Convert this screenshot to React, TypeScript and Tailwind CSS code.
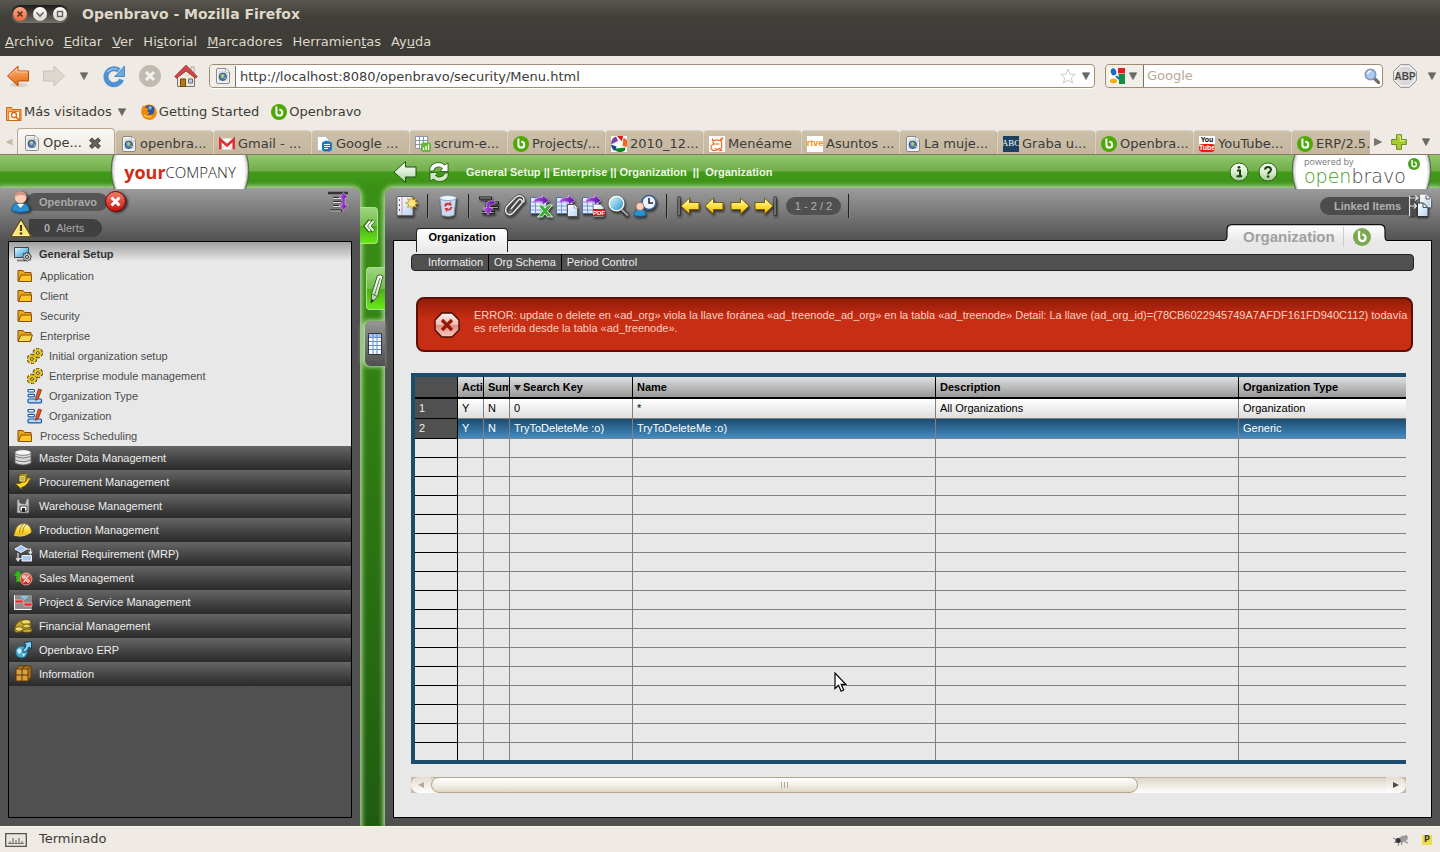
import React from 'react';

type IconProps = { className?: string };

/* Gradients shared by all the drawings below */
const SharedDefs = () => (
  <svg className="absolute h-0 w-0" aria-hidden="true">
    <defs>
      <linearGradient id="orange" x1="0" y1="0" x2="0" y2="1"><stop offset="0" stopColor="#ffb070" /><stop offset="1" stopColor="#e06a10" /></linearGradient>
      <linearGradient id="yellow" x1="0" y1="0" x2="0" y2="1"><stop offset="0" stopColor="#fffce0" /><stop offset="0.5" stopColor="#ffe040" /><stop offset="1" stopColor="#e8b000" /></linearGradient>
      <linearGradient id="silver" x1="0" y1="0" x2="0" y2="1"><stop offset="0" stopColor="#ffffff" /><stop offset="0.5" stopColor="#dcecd4" /><stop offset="1" stopColor="#a8cc98" /></linearGradient>
      <linearGradient id="red" x1="0" y1="0" x2="0" y2="1"><stop offset="0" stopColor="#f08070" /><stop offset="1" stopColor="#c81008" /></linearGradient>
      <linearGradient id="lens" x1="0" y1="0" x2="1" y2="1"><stop offset="0" stopColor="#e8faff" /><stop offset="0.5" stopColor="#80c8e8" /><stop offset="1" stopColor="#2888c0" /></linearGradient>
      <linearGradient id="paper" x1="0" y1="0" x2="1" y2="1"><stop offset="0" stopColor="#ffffff" /><stop offset="1" stopColor="#b8d4f4" /></linearGradient>
      <linearGradient id="purple" x1="0" y1="0" x2="1" y2="0"><stop offset="0" stopColor="#c050e8" /><stop offset="1" stopColor="#5a10a0" /></linearGradient>
      <linearGradient id="tab" x1="0" y1="0" x2="0" y2="1"><stop offset="0" stopColor="#ffffff" /><stop offset="1" stopColor="#e8e8e8" /></linearGradient>
      <linearGradient id="glossRed" x1="0" y1="0" x2="0" y2="1"><stop offset="0" stopColor="#fff0ee" /><stop offset="0.5" stopColor="#f0b8b0" /><stop offset="0.52" stopColor="#e09088" /><stop offset="1" stopColor="#f8c8c0" /></linearGradient>
    </defs>
  </svg>
);

const Caret = ({ className = 'h-2 w-2 text-[#6a6a66]' }: IconProps) => (
  <svg viewBox="0 0 8 8" className={className}><path d="M0.3 0.8h7.4L4 7.6z" fill="currentColor" stroke="#55554f" strokeWidth="0.6" /></svg>
);

const BravoIcon = ({ className = 'h-4 w-4 text-[#4ea808]' }: IconProps) => (
  <svg viewBox="0 0 16 16" className={className}>
    <circle cx="8" cy="8" r="8" fill="currentColor" />
    <path d="M5.400 2.500v6.200a2.900 2.900 0 1 0 2.900-2.900" fill="none" stroke="#fff" strokeWidth="2" />
  </svg>
);

const PageIcon = () => (
  <svg viewBox="0 0 16 16" className="h-4 w-4">
    <path d="M1.500 2q0-1.500 1.500-1.500h8l3.500 3.500v10q0 1.500-1.500 1.500H3q-1.500 0-1.500-1.500z" fill="#f8f8f6" stroke="#888a85" />
    <path d="M3 2.500h7v3h3.200v8H3z" fill="#dddedb" />
    <path d="M10.500.8v4h4" fill="#fff" stroke="#9a9c98" strokeWidth="0.7" />
    <circle cx="7.800" cy="8.800" r="3.700" fill="#4a78c0" stroke="#244a80" strokeWidth="0.8" />
    <path d="M5.500 7l2.300-1.200L9.500 7.500 8.500 9.500 7 10.500zM9 10.500l2-1.500-.5 2.500z" fill="#b8c868" />
  </svg>
);

const GmailIcon = () => (
  <svg viewBox="0 0 16 16" className="h-4 w-4">
    <rect y="2.500" width="16" height="11" fill="#fff" />
    <path d="M1.300 13.500V3.500L8 9.500l6.700-6v10" fill="none" stroke="#e03030" strokeWidth="2.600" />
    <path d="M3 13l3-4M13 13l-3-4" stroke="#e8b0a8" strokeWidth="0.8" />
  </svg>
);

const GoogleDocIcon = () => (
  <svg viewBox="0 0 16 16" className="h-4 w-4">
    <path d="M.5.5h8l3 3v11H.5z" fill="#fff" stroke="#b8c4d0" />
    <path d="M5 6.500l4-2 6 2v7l-2 2H7l-2-2z" fill="#1d78b8" />
    <path d="M7 8.500h6M7 10.500h6M7 12.500h4" stroke="#fff" strokeWidth="1.100" />
  </svg>
);

const SheetIcon = () => (
  <svg viewBox="0 0 16 16" className="h-4 w-4">
    <path d="M.5.5h12v12H.5zM.5 4.500h12M.5 8.500h12M4.500.5v12M8.500.5v12" fill="#fff" stroke="#8898a8" />
    <rect x="6" y="6.500" width="10" height="9.500" rx="2" fill="#68b838" />
    <path d="M8.500 14v-2.500M11 14v-4M13.500 14V8.500" stroke="#fff" strokeWidth="1.300" />
  </svg>
);

const PicasaIcon = () => (
  <svg viewBox="0 0 16 16" className="h-4 w-4">
    <path d="M0 0h16v16H0z" fill="#fff" />
    <path d="M6 0h6l-1 5.500z" fill="#e01818" />
    <path d="M12.500 1.500L16 4v7l-4.500-1z" fill="#f06820" />
    <path d="M5 12.500l9.500-1L14 14.500q-5 3-9 .5z" fill="#108818" />
    <path d="M.5 11L0 8.500l5.500 2-1 4.500q-3-1-4-4z" fill="#184890" />
    <path d="M0 7.500Q.5 2 5 .5L7 5l-6 3z" fill="#8040a0" />
  </svg>
);

const MeneameIcon = () => (
  <svg viewBox="0 0 16 16" className="h-4 w-4">
    <path d="M0 0h16v16H0z" fill="#fff" />
    <path d="M14.500 2.500q-2.500-1-3 1.500M4 2.500Q2.500 4 4.500 5q3-2 6-.5 2 .5 3-1M4.500 5Q3 7 5.500 8h5M5.500 8Q1.500 9 2 12t4 2.500q3.500 0 4-2.500M6 12.500q2.500 2 5-.5M12 5q1.500 3 .5 6.500t-2.500 3h3.500" fill="none" stroke="#f06820" strokeWidth="1.200" />
  </svg>
);

const TextFavicon = ({ kind }: { kind: string }) => {
  if (kind === 'rtve') return <span className="flex h-4 w-4 items-center justify-center bg-white text-[9px] font-bold text-[#f09010] [font-family:'Liberation_Sans',sans-serif]">rtve</span>;
  if (kind === 'abc') return <span className="flex h-4 w-4 items-center justify-center overflow-hidden bg-[#1c4060] text-[9px] text-white [font-family:'Liberation_Serif',serif]">ABC</span>;
  return (
    <span className="flex h-4 w-4 flex-col text-center text-[7px] font-bold leading-[8px] [font-family:'Liberation_Sans',sans-serif]">
      <span className="bg-white text-black">You</span>
      <span className="rounded-sm bg-[#f01808] text-white">Tube</span>
    </span>
  );
};

const Favicon = ({ kind }: { kind: string }) => {
  switch (kind) {
    case 'page': return <PageIcon />;
    case 'gmail': return <GmailIcon />;
    case 'doc': return <GoogleDocIcon />;
    case 'sheet': return <SheetIcon />;
    case 'picasa': return <PicasaIcon />;
    case 'meneame': return <MeneameIcon />;
    case 'bravo': return <BravoIcon />;
    default: return <TextFavicon kind={kind} />;
  }
};

const menus = [
  ['', 'A', 'rchivo'],
  ['', 'E', 'ditar'],
  ['', 'V', 'er'],
  ['Hi', 's', 'torial'],
  ['', 'M', 'arcadores'],
  ['Herramien', 't', 'as'],
  ['Ay', 'u', 'da'],
];

const browserTabs = [
  { icon: 'page', label: 'openbra...' },
  { icon: 'gmail', label: 'Gmail - ...' },
  { icon: 'doc', label: 'Google ...' },
  { icon: 'sheet', label: 'scrum-e...' },
  { icon: 'bravo', label: 'Projects/...' },
  { icon: 'picasa', label: '2010_12...' },
  { icon: 'meneame', label: 'Menéame' },
  { icon: 'rtve', label: 'Asuntos ...' },
  { icon: 'page', label: 'La muje...' },
  { icon: 'abc', label: 'Graba u...' },
  { icon: 'bravo', label: 'Openbra...' },
  { icon: 'youtube', label: 'YouTube...' },
  { icon: 'bravo', label: 'ERP/2.5...' },
];

const BrowserChrome = () => (
  <header className="bg-[#efeae3] text-[13px] text-[#3c3b37] [font-family:'DejaVu_Sans',sans-serif]">
    {/* Window title and menus */}
    <div className="bg-linear-to-b from-[#59574f] via-[#403f3a] via-30% to-[#3c3b37] text-[#dfd8c8]">
      <div className="flex h-7 items-center px-[11px]">
        <div className="flex h-[18px] w-[58px] items-center justify-center gap-[6px] rounded-full bg-linear-to-b from-[#1c1c1a] to-[#75736c]">
          <button aria-label="Cerrar" className="h-[14px] w-[14px] rounded-full bg-linear-to-b from-[#f8a888] to-[#f06838]">
            <svg viewBox="0 0 14 14"><path d="M4.500 4.500l5 5M9.500 4.500l-5 5" stroke="#5a2a18" strokeWidth="1.600" /></svg>
          </button>
          <button aria-label="Minimizar" className="h-[14px] w-[14px] rounded-full bg-linear-to-b from-white to-[#d8d4c8]">
            <svg viewBox="0 0 14 14"><path d="M3.500 5.500L7 9l3.500-3.500" fill="none" stroke="#66645c" strokeWidth="1.600" /></svg>
          </button>
          <button aria-label="Maximizar" className="h-[14px] w-[14px] rounded-full bg-linear-to-b from-white to-[#d8d4c8]">
            <svg viewBox="0 0 14 14"><path d="M4.500 4.500h5v5h-5z" fill="none" stroke="#66645c" strokeWidth="1.400" /></svg>
          </button>
        </div>
        <h1 className="ml-[13px] text-[14px] font-bold">Openbravo - Mozilla Firefox</h1>
      </div>
      <nav className="flex h-7 items-center gap-[10px] px-[5px] pb-px">
        {menus.map(([before, key, after]) => (
          <button key={after}>{before}<u>{key}</u>{after}</button>
        ))}
      </nav>
    </div>

    {/* Navigation toolbar */}
    <div className="flex h-10 items-center pl-[6px] pr-1">
      <button aria-label="Atrás">
        <svg viewBox="0 0 24 24" className="h-6 w-6">
          <ellipse cx="13" cy="21" rx="9" ry="2" fill="#d8d2c8" />
          <path d="M1.500 12L12 2v5h10.500v10H12v5z" fill="url(#orange)" stroke="#c04810" />
          <path d="M3.500 12L11 4.800V8h10.500" fill="none" stroke="#ffd0a8" />
        </svg>
      </button>
      <button aria-label="Adelante" className="ml-3">
        <svg viewBox="0 0 24 24" className="h-6 w-6"><path d="M22.500 12L12 2v5H1.500v10H12v5z" fill="#dcd8d0" stroke="#c8c4bb" /></svg>
      </button>
      <button aria-label="Páginas recientes" className="ml-[14px]"><Caret /></button>
      <button aria-label="Recargar" className="ml-[14px]">
        <svg viewBox="0 0 24 24" className="h-6 w-6">
          <path d="M19.500 15.500A8 8 0 1 1 17 6.500" fill="none" stroke="#5090d0" strokeWidth="5" />
          <path d="M22.500 2v10.500h-10L16.500 9z" fill="#6aa8e0" stroke="#4a88c8" />
          <path d="M5.500 8a8 8 0 0 1 10-2.500" fill="none" stroke="#90c0ec" strokeWidth="1.500" />
        </svg>
      </button>
      <button aria-label="Detener" className="ml-3">
        <svg viewBox="0 0 24 24" className="h-6 w-6"><circle cx="12" cy="12" r="11" fill="#c0bbb2" /><path d="M8 8l8 8M16 8l-8 8" stroke="#f4f2ee" strokeWidth="3" /></svg>
      </button>
      <button aria-label="Inicio" className="ml-3">
        <svg viewBox="0 0 24 24" className="h-6 w-6">
          <path d="M3.500 11v11.500h17V11L12 4z" fill="#ece8e0" stroke="#77736a" />
          <path d="M17 3h3v6h-3z" fill="#f0ece8" stroke="#888" strokeWidth="0.700" />
          <path d="M.8 12.500L12 1.200l11.200 11.300-1.700 1.700L12 7l-9.500 7.200z" fill="#d04848" stroke="#982020" strokeWidth="0.800" />
          <path d="M6.500 15h5v7.500h-5z" fill="#b87818" stroke="#704808" />
          <path d="M14.500 15h4v4h-4z" fill="#b8d0e8" stroke="#706c60" />
        </svg>
      </button>
      <div className="ml-[11px] flex h-6 flex-1 items-center rounded border border-[#a08c70] bg-white shadow-[0_1px_0_#fff]">
        <span className="flex h-full w-[25px] items-center justify-center rounded-l bg-[#f2eee8]"><PageIcon /></span>
        <input aria-label="Dirección" defaultValue="http://localhost:8080/openbravo/security/Menu.html" className="h-[21px] min-w-0 flex-1 border-l border-[#7c7060] px-1 outline-none" />
        <button aria-label="Marcar esta página">
          <svg viewBox="0 0 16 16" className="h-4 w-4"><path d="M8 1l2 5 5.300.3-4 3.500 1.300 5.200L8 12.200 3.400 15l1.300-5.200-4-3.500L6 6z" fill="#fff" stroke="#cfcac0" /></svg>
        </button>
        <button aria-label="Historial de direcciones" className="ml-[6px] mr-1"><Caret /></button>
      </div>
      <div className="ml-[10px] flex h-6 w-[278px] items-center rounded border border-[#a08c70] bg-white">
        <button aria-label="Motor de búsqueda" className="flex h-full w-[38px] items-center gap-1 rounded-l border-r border-[#7c7060] bg-[#f2eee8] pl-[3px]">
          <svg viewBox="0 0 16 16" className="h-4 w-4">
            <path d="M0 0h16v16H0z" fill="#fff" />
            <path d="M9 0h7v5.500H9z" fill="#e02020" /><path d="M9.500 6H16v10h-6z" fill="#109040" />
            <ellipse cx="4.500" cy="3.800" rx="2.800" ry="3.600" fill="#2068c8" transform="rotate(-15 4.500 3.800)" /><ellipse cx="4.500" cy="13" rx="3.600" ry="2.500" fill="#f0b010" />
            <path d="M7 8l3 3" stroke="#2068c8" strokeWidth="2" />
          </svg>
          <Caret />
        </button>
        <input aria-label="Buscar" placeholder="Google" className="min-w-0 flex-1 px-[3px] outline-none placeholder:text-[#b8aa94]" />
        <button aria-label="Iniciar búsqueda" className="mr-[2px]">
          <svg viewBox="0 0 16 16" className="h-4 w-4">
            <path d="M10 10l4.500 4.500" stroke="#70706c" strokeWidth="3.200" strokeLinecap="round" />
            <circle cx="6.500" cy="6.500" r="5.200" fill="#a8ccf0" stroke="#8898b0" strokeWidth="1.600" />
            <path d="M3.500 6q.5-2.500 3-3" fill="none" stroke="#fff" strokeWidth="1.400" />
          </svg>
        </button>
      </div>
      <button aria-label="Adblock Plus" className="ml-[10px]">
        <svg viewBox="0 0 24 24" className="h-6 w-6">
          <path d="M7.500.7h9l6.800 6.800v9l-6.800 6.800h-9L.7 16.500v-9z" fill="#d8d8d8" stroke="#888" />
          <path d="M8 2h8l6 6v8l-6 6H8l-6-6V8z" fill="none" stroke="#fff" strokeWidth="1.200" />
          <text x="12" y="15.500" textAnchor="middle" fontSize="10" fontWeight="bold" fill="#4a4a4a" fontFamily="Liberation Sans, sans-serif">ABP</text>
        </svg>
      </button>
      <button aria-label="Opciones" className="ml-[11px]"><Caret /></button>
    </div>

    {/* Bookmarks */}
    <div className="flex h-8 items-center pl-[6px]">
      <button className="flex items-center gap-[2px]">
        <svg viewBox="0 0 16 16" className="mt-1 h-4 w-4">
          <path d="M.5 14.500V1.500h5l1 2h8.500v11z" fill="#f4a860" stroke="#d06810" />
          <path d="M2.500 14V5.500h11V14" fill="#fff4e4" stroke="#e08030" />
          <circle cx="8" cy="9" r="2.500" fill="#fff" stroke="#d86810" strokeWidth="1.300" /><path d="M10 11l3 3" stroke="#d86810" strokeWidth="1.600" />
        </svg>
        Más visitados
        <Caret className="ml-1 h-2 w-2 text-[#6a6a66]" />
      </button>
      <a href="#start" className="ml-[15px] flex items-center gap-[2px]">
        <svg viewBox="0 0 16 16" className="h-4 w-4">
          <circle cx="8" cy="8" r="7.600" fill="#e06a08" />
          <circle cx="8.500" cy="6.500" r="5.300" fill="#2458a0" />
          <path d="M7 3l3-1 1 2-2 2z" fill="#80b8e8" />
          <path d="M.5 5L2 1.500 4.500 3.500 8 5 6 7l2.500 1.500L6.500 11l5-.5q2.500-2 1.500-7 4 4 2 8.500T7 15.500 .500 8z" fill="#f08810" />
          <path d="M3 11q4 3 8 1" fill="none" stroke="#ffd040" strokeWidth="1.200" />
        </svg>
        Getting Started
      </a>
      <a href="#openbravo" className="ml-3 flex items-center gap-[2px]"><BravoIcon />Openbravo</a>
    </div>

    {/* Browser tabs */}
    <div className="flex h-[27px] items-end border-b border-[#8c7866]">
      <button aria-label="Pestañas anteriores" className="mb-2 ml-[5px] mr-1">
        <svg viewBox="0 0 8 8" className="h-2 w-2"><path d="M7.500.5v7L.5 4z" fill="#c8baa4" /></svg>
      </button>
      <div role="tablist" className="flex min-w-0 flex-1 items-end overflow-hidden">
        <div role="tab" aria-selected="true" className="flex h-[26px] w-[98px] shrink-0 items-center rounded-t border border-b-0 border-[#b8a890] bg-linear-to-b from-[#faf8f5] to-[#efeae3] pl-[6px] pt-[2px]">
          <PageIcon />
          <span className="ml-[3px]">Ope...</span>
          <button aria-label="Cerrar pestaña" className="ml-[6px]">
            <svg viewBox="0 0 14 14" className="h-[14px] w-[14px]"><path d="M2.500 3L11.500 11.500M11.500 3L2.500 11.500" stroke="#3e3d39" strokeWidth="4.200" /><path d="M3 3.500L11 11M11 3.500L3 11" stroke="#66645e" strokeWidth="2.400" /></svg>
          </button>
        </div>
        {browserTabs.map((tab, i) => (
          <button key={i} role="tab" aria-selected="false" className="flex h-6 w-[98px] shrink-0 items-center gap-[3px] overflow-hidden whitespace-nowrap rounded-t-sm border-l border-r border-t border-l-[#ddd2c0] border-r-[#c4b59c] border-t-[#ddd2c0] bg-linear-to-b from-[#cdc0aa] to-[#c4b69e] pl-[5px] pt-[2px]">
            <span className="shrink-0"><Favicon kind={tab.icon} /></span>
            {tab.label}
          </button>
        ))}
      </div>
      <button aria-label="Pestañas siguientes" className="mb-2 ml-1">
        <svg viewBox="0 0 8 8" className="h-2 w-2"><path d="M.5.5v7l7-3.500z" fill="#77756e" stroke="#55544e" strokeWidth="0.600" /></svg>
      </button>
      <button aria-label="Nueva pestaña" className="mb-1 ml-[9px]">
        <svg viewBox="0 0 16 16" className="h-4 w-4"><path d="M5.500.7h5v4.800h4.800v5h-4.800v4.800h-5v-4.800H.7v-5h4.800z" fill="#a8cc30" stroke="#6a8c20" /><path d="M6.700 2h2.600v4.700h4.800" fill="none" stroke="#e0f090" /></svg>
      </button>
      <button aria-label="Listar pestañas" className="mb-2 ml-[15px] mr-[10px]"><Caret /></button>
    </div>
  </header>
);

const TopBar = () => (
  <div className="flex h-[33px] bg-[linear-gradient(to_bottom,#92c66e_0,#71ae49_16px,#429a1a_17px,#3a8f14_33px)] [font-family:'Liberation_Sans',sans-serif]">
    <div className="flex w-[385px] shrink-0 pl-[110px]">
      <div className="relative z-10 flex h-[34px] w-[140px] items-center justify-center">
        <svg viewBox="0 0 140 34" preserveAspectRatio="none" className="absolute inset-0 h-full w-full">
          <path d="M3 0Q-2 16 4 34H136Q142 16 137 0z" fill="#4c6c3c" />
          <path d="M4 0Q-1 16 5 34H135Q141 16 136 0z" fill="#b4b4b4" />
          <path d="M5 0Q0 16 6 34H134Q140 16 135 0z" fill="#e4e4e4" />
          <path d="M7 0Q2 16 7 34H133Q138 16 133 0z" fill="#fff" />
        </svg>
        <span className="relative text-[18px] font-bold leading-none text-[#d42c14] [font-family:'Open_Sans',sans-serif]">your</span>
        <span className="relative text-[15px] font-light leading-none text-[#1c1c1c] [font-family:'Open_Sans',sans-serif]">COMPANY</span>
      </div>
    </div>
    <button aria-label="Back" className="ml-2">
      <svg viewBox="0 0 24 24" className="h-6 w-6"><path d="M1 12L12.500 1.500V7H23v10H12.500v5.500z" fill="url(#silver)" stroke="#1c5408" /></svg>
    </button>
    <button aria-label="Refresh" className="ml-[10px]">
      <svg viewBox="0 0 24 24" className="h-6 w-6">
        <g stroke="#1c5408" strokeWidth="0.800" fill="#fff">
          <path d="M2.500 11Q3 3 11 2.500q4-.2 6.500 2.500L21 3v8.500h-8L15.500 8.500q-2-2-4.500-1.500-4 .5-4.500 4z" />
          <path d="M21.500 13Q21 21 13 21.500q-4 .2-6.500-2.500L3 21v-8.500h8L8.500 15.500q2 2 4.500 1.500 4-.5 4.500-4z" fill="#d4e8ca" />
        </g>
      </svg>
    </button>
    <p className="ml-[15px] flex min-w-0 items-center whitespace-pre pt-[2px] text-[11px] font-bold text-[#eef7e8]">General Setup || Enterprise || Organization  ||  Organization</p>
    <button aria-label="About" className="ml-auto">
      <svg viewBox="0 0 20 20" className="h-5 w-5"><circle cx="10" cy="10" r="9" fill="url(#silver)" stroke="#2c6c14" /><path d="M8 8.500h3v5.500M7.500 14.200h5.500" fill="none" stroke="#184808" strokeWidth="2" /><circle cx="10" cy="5.300" r="1.400" fill="#184808" /></svg>
    </button>
    <button aria-label="Help" className="ml-[9px]">
      <svg viewBox="0 0 20 20" className="h-5 w-5"><circle cx="10" cy="10" r="9" fill="url(#silver)" stroke="#2c6c14" /><path d="M7 7.700q.2-2.700 3-2.700t3 2.500q0 1.500-1.500 2.500-1.300.8-1.300 2.200" fill="none" stroke="#184808" strokeWidth="2.100" /><circle cx="10.100" cy="14.600" r="1.300" fill="#184808" /></svg>
    </button>
    <div className="relative z-10 ml-[13px] mr-2 h-[34px] w-[141px] shrink-0 pl-[13px] pt-px">
      <svg viewBox="0 0 141 34" preserveAspectRatio="none" className="absolute inset-0 h-full w-full">
        <path d="M3 0Q-2 16 4 34H137Q143 16 138 0z" fill="#4c6c3c" />
        <path d="M4 0Q-1 16 5 34H136Q142 16 137 0z" fill="#b4b4b4" />
        <path d="M5 0Q0 16 6 34H135Q141 16 136 0z" fill="#e4e4e4" />
        <path d="M7 0Q2 16 7 34H134Q139 16 134 0z" fill="#fff" />
      </svg>
      <p className="relative text-[9px] leading-[12px] text-[#777] [font-family:'Open_Sans',sans-serif]">powered by</p>
      <p className="relative text-[19px] font-extralight leading-[17px] text-[#444] [font-family:'DejaVu_Sans',sans-serif]"><span className="text-[#3c9c10]">open</span>bravo</p>
      <BravoIcon className="absolute right-[12px] top-[3px] h-3 w-3 text-[#48a41c]" />
    </div>
  </div>
);

const FolderIcon = ({ open = false }: { open?: boolean }) => (
  <svg viewBox="0 0 16 16" className="h-4 w-4">
    <path d="M1 13V2.500h5l1.500 2H14V13z" fill="#e8a818" stroke="#8c4c08" />
    {open
      ? <path d="M1 13.500L4 7h11.500l-2.500 6.500z" fill="#fcd850" stroke="#8c4c08" />
      : <path d="M4 7h10.500v6.500H1.500z" fill="#fac828" stroke="#8c4c08" />}
  </svg>
);

const GearsIcon = () => (
  <svg viewBox="0 0 16 16" className="h-4 w-4">
    <g fill="none">
      <circle cx="10.800" cy="5" r="4" stroke="#5c4808" strokeWidth="2.600" strokeDasharray="2.900 1.290" />
      <circle cx="5" cy="11" r="4" stroke="#5c4808" strokeWidth="2.600" strokeDasharray="2.900 1.290" />
      <circle cx="10.800" cy="5" r="3.800" fill="#e4c428" stroke="#e0bc20" strokeWidth="1.400" strokeDasharray="2 1.980" />
      <circle cx="5" cy="11" r="3.800" fill="#e4c428" stroke="#e0bc20" strokeWidth="1.400" strokeDasharray="2 1.980" />
    </g>
    <circle cx="10.800" cy="5" r="1.400" fill="#fff4b0" stroke="#5c4808" /><circle cx="5" cy="11" r="1.400" fill="#fff4b0" stroke="#5c4808" />
  </svg>
);

const WindowEditIcon = () => (
  <svg viewBox="0 0 16 16" className="h-4 w-4">
    <g fill="#fff" stroke="#1858a8" strokeWidth="1.200">
      <rect x="1" y="1.500" width="6.500" height="2.500" rx="1" /><rect x="1" y="6.300" width="6.500" height="2.500" rx="1" /><rect x="1" y="11" width="13.500" height="3.800" rx="1" fill="#b8d8f8" />
    </g>
    <path d="M11.500 1l3 1-3.200 8.500-2.600 2 .2-3.600z" fill="#e05828" stroke="#802808" strokeWidth="0.800" />
  </svg>
);

const menuTree = [
  { label: 'Application', icon: <FolderIcon /> },
  { label: 'Client', icon: <FolderIcon /> },
  { label: 'Security', icon: <FolderIcon /> },
  { label: 'Enterprise', icon: <FolderIcon open /> },
  { label: 'Initial organization setup', icon: <GearsIcon />, nested: true },
  { label: 'Enterprise module management', icon: <GearsIcon />, nested: true },
  { label: 'Organization Type', icon: <WindowEditIcon />, nested: true },
  { label: 'Organization', icon: <WindowEditIcon />, nested: true },
  { label: 'Process Scheduling', icon: <FolderIcon /> },
];

const modules = [
  {
    label: 'Master Data Management',
    art: <g fill="#d8d8d8" stroke="#666" strokeWidth="0.800"><path d="M2 4v11q8 4 16 0V4z" /><ellipse cx="10" cy="4.500" rx="8" ry="2.800" fill="#f8f8f8" /><path d="M2 8q8 4 16 0M2 11.700q8 4 16 0" fill="none" /></g>,
  },
  {
    label: 'Procurement Management',
    art: <g stroke="#5c4808" strokeWidth="0.700"><path d="M2 11l3 .5Q9 12 13 6h5.500l-2 2Q14 14 8.500 15.500L9 18z" fill="#fcd820" /><path d="M6 3.500L8 1.500h6v6.500l-2 2H6z" fill="#a88c20" /><path d="M7 4.500h4.500V9H7z" fill="#c8b048" stroke="#ecdc80" /><path d="M12 3.500l2-2" fill="none" stroke="#ecdc80" /></g>,
  },
  {
    label: 'Warehouse Management',
    art: <g><path d="M4 17V4l2-1 1 4 5 1 2-6 2 1v14z" fill="#c4c4c4" stroke="#555" strokeWidth="0.800" /><path d="M7 10h7v5H7z" fill="#f4f4f4" stroke="#444" /><path d="M9 12h3v4H9z" fill="#222" /></g>,
  },
  {
    label: 'Production Management',
    art: <g stroke="#8c6808" strokeWidth="0.800"><path d="M1 15.500Q3 3 11.500 3.500 18 5 18.500 12q-8 6-17.500 3.500z" fill="url(#yellow)" /><path d="M6.500 13Q7 6 11 3.500M9.500 13q0-6 4-9" fill="none" /><path d="M1 15q9 3 17-3" fill="none" stroke="#fff09a" /></g>,
  },
  {
    label: 'Material Requirement (MRP)',
    art: <g><path d="M2 5l6-3.500L14 5 8 8.500zM9 11.500h9.500v5.500H9z" fill="#a8c8f4" stroke="#f0f4fc" /><path d="M5 9v7M3 14l2 3 2-3M14 5h3.500v4.500M15.500 7.500l2 2.500 1.500-2.500M5 14.500h4" fill="none" stroke="#e4e4e4" strokeWidth="1.200" /></g>,
  },
  {
    label: 'Sales Management',
    art: <g><path d="M5 2l5 6H7v6H3V8H0z" fill="#38b818" stroke="#186008" strokeWidth="0.600" /><circle cx="13" cy="11" r="6" fill="url(#red)" stroke="#fcb8b0" strokeWidth="0.800" /><path d="M10.500 14.500l5-7" stroke="#fff" strokeWidth="1.200" /><circle cx="11" cy="9" r="1.300" fill="none" stroke="#fff" /><circle cx="15" cy="13" r="1.300" fill="none" stroke="#fff" /></g>,
  },
  {
    label: 'Project & Service Management',
    art: <g><path d="M2 3h17v14H2z" fill="#8c8c8c" /><path d="M1.500 3v14.500h17" fill="none" stroke="#fff" /><path d="M2 8h8v3H2zM11 11h8v3h-8z" fill="#e02828" stroke="#fcc" strokeWidth="0.600" /><path d="M7 4h9l-4.500 4z" fill="#80c8e8" /></g>,
  },
  {
    label: 'Financial Management',
    art: <g fill="#c4a830" stroke="#5c4808" strokeWidth="0.800"><ellipse cx="14" cy="14" rx="5" ry="2.500" /><path d="M1 14.500l2-6q6-7 12-5l3 3-1 7q-5-2-10 3-4 1-6-2z" /><ellipse cx="13" cy="6" rx="4.500" ry="2.300" fill="#f0dc70" /><ellipse cx="6" cy="13" rx="4" ry="2.300" fill="#f0dc70" /><ellipse cx="13.500" cy="10" rx="4" ry="2" fill="#e4cc58" /></g>,
  },
  {
    label: 'Openbravo ERP',
    art: <g><circle cx="8.500" cy="12" r="6" fill="#48a8d0" stroke="#145078" strokeWidth="0.700" /><path d="M4 10l3-2 2 3-2 3-2-1zM9 14l3-1-1 4z" fill="#c8f0f8" /><path d="M11 2.500l7.500-1v7.500l-2.500-2q-1 4-5 5.500l-1.500-2.500q3-1.500 3.500-5z" fill="#88d0f0" stroke="#0c4468" /></g>,
  },
  {
    label: 'Information',
    art: <g fill="#d8a040" stroke="#5c3808"><path d="M3 5l3-3h12v11l-3 4H3z" fill="#b07820" /><path d="M3 5h12v12H3zM9 5v12M3 11h12" /><path d="M15 5l3-3M9 5l3-3" fill="none" /></g>,
  },
];

const Sidebar = () => (
  <aside className="relative flex w-[360px] shrink-0 flex-col rounded-tr-lg bg-[linear-gradient(to_bottom,#9c9c9c_0,#505050_54px)] px-2 pb-2 text-[11px] shadow-[0_0_5px_2px_#b8dca4] [font-family:'Liberation_Sans',sans-serif]">
    <div className="flex h-7 items-center">
      <svg viewBox="0 0 24 24" className="z-10 ml-[2px] h-6 w-6 drop-shadow-[2px_1px_1px_#333]">
        <path d="M1.500 21q0-7 6-8h6q6 1 6 8-9 3-18 0z" fill="#2890d0" stroke="#0c4880" strokeWidth="0.700" />
        <path d="M7 14l3.500 4 3.500-4z" fill="#fff" />
        <circle cx="10.500" cy="7.500" r="6" fill="#fcd0b8" stroke="#987060" strokeWidth="0.600" />
        <path d="M4.500 7Q5 1.500 10.500 1.500T16.500 7q-5-4-12 0z" fill="#d89888" />
      </svg>
      <span className="-ml-2 flex h-[18px] w-[82px] items-center rounded-full bg-[#555] pl-[13px] font-bold text-[#aaa]">Openbravo</span>
      <button aria-label="Log out" className="z-10 -ml-1">
        <svg viewBox="0 0 24 24" className="h-6 w-6 drop-shadow-[2px_1px_1px_#333]"><circle cx="11.500" cy="11.500" r="10" fill="url(#red)" stroke="#700" /><path d="M7.500 7.500l8 8M15.500 7.500l-8 8" stroke="#fff" strokeWidth="3" /></svg>
      </button>
      <button aria-label="Expand menu" className="ml-auto mr-[1px]">
        <svg viewBox="0 0 24 24" className="h-6 w-6">
          <path d="M1 3h20M6 8h9M6 12h9M6 16h9M3 20.500h12" stroke="#333" strokeWidth="2.600" /><path d="M6 8.500h8M6 12.500h8M6 16.500h8M3 21h11" stroke="#ddd" />
          <path d="M16.500 2.500l4.500 5.500h-3v7h3l-4.500 5.500L12 15h3V8h-3z" fill="url(#purple)" stroke="#e4ccf0" strokeWidth="0.500" />
        </svg>
      </button>
    </div>
    <div className="mb-px flex h-6 items-center">
      <svg viewBox="0 0 24 24" className="z-10 ml-[1px] h-6 w-6"><path d="M12 3.500L22 20.500H2z" fill="#fce870" stroke="#6c5410" strokeWidth="1.600" strokeLinejoin="round" /><path d="M12 5.500L20.300 19.500H3.700z" fill="none" stroke="#fffce0" strokeWidth="0.800" /><path d="M12 9v6" stroke="#4c3c08" strokeWidth="2.200" /><circle cx="12" cy="17.500" r="1.300" fill="#4c3c08" /></svg>
      <span className="-ml-1 flex h-[18px] w-[73px] items-center gap-[6px] rounded-r-full bg-[#404040] pl-[15px] text-[#aaa]"><b>0</b>Alerts</span>
    </div>
    <nav className="flex-1 border border-black">
      <div className="bg-[#e8e8e8]">
        <button className="flex h-6 w-full items-center gap-[6px] bg-linear-to-b from-[#a0a0a0] to-[#e8e8e8] to-80% pl-1 font-bold text-[#333]">
          <svg viewBox="0 0 20 20" className="h-5 w-5"><path d="M1.500 3.500h14v10h-14z" fill="url(#lens)" stroke="#444" /><path d="M4 16.500h9" stroke="#888" strokeWidth="2" /><path d="M13.500 8l1 1.500 2-.5.5 2 1.500 1-1 2 .3 1.800-2 .2-1.300 1.500-1.500-1.200-2 .2-.2-2L9.500 13l1.200-1.500-.2-2 2 .2z" fill="#bbb" stroke="#333" strokeWidth="0.800" /><circle cx="14" cy="13" r="1.500" fill="#fff" stroke="#333" /></svg>
          General Setup
        </button>
        {menuTree.map((item) => (
          <button key={item.label} className={`flex h-5 w-full items-center text-[#4c4c4c] ${item.nested ? 'gap-[6px] pl-[18px]' : 'gap-[7px] pl-2'}`}>
            {item.icon}
            {item.label}
          </button>
        ))}
      </div>
      {modules.map((item) => (
        <button key={item.label} className="flex h-6 w-full items-center gap-[6px] bg-linear-to-b from-[#666] to-[#2a2a2a] pl-1 text-[#eee]">
          <svg viewBox="0 0 20 20" className="h-5 w-5">{item.art}</svg>
          {item.label}
        </button>
      ))}
    </nav>
  </aside>
);

/* Narrow green strip between menu and window */
const Gutter = () => (
  <div className="relative z-10 flex w-[25px] shrink-0 flex-col items-end">
    <button aria-label="Hide menu" className="mr-[7px] mt-[19px] flex h-[37px] w-[18px] items-center justify-center rounded-r border border-l-0 border-[#a8e488] bg-[linear-gradient(to_bottom,#a0d480,#70bc48_50%,#4cac18_50%,#68e818)]">
      <svg viewBox="0 0 12 14" className="h-[14px] w-3"><path d="M7 1.500L2.500 7 7 12.500M10.500 1.500L6 7l4.500 5.500" fill="none" stroke="#206008" strokeWidth="4" /><path d="M7 2L2.800 7 7 12M10.500 2L6.300 7l4.200 5" fill="none" stroke="#f0f8ec" strokeWidth="2" /></svg>
    </button>
    <button aria-label="Edit view" className="mt-[23px] flex h-[43px] w-[19px] items-center justify-center rounded-l border border-r-0 border-[#a8e488] bg-[linear-gradient(to_bottom,#a0d480,#70bc48_50%,#4cac18_50%,#68e818)]">
      <svg viewBox="0 0 16 32" className="h-8 w-4"><path d="M9.500 2.500q3-1.500 5.500.5L9.500 24 3 30l.5-9z" fill="url(#silver)" stroke="#3c5c2c" /><path d="M12 5L6.500 22M3.800 21l5.500 2.500" fill="none" stroke="#547c44" /><path d="M3 30l.5-4 2.300 1.500z" fill="#222" /></svg>
    </button>
    <button aria-label="Grid view" className="mt-[11px] flex h-[45px] w-5 items-center justify-center rounded-l-md bg-linear-to-b from-[#969696] to-[#505050] shadow-[-2px_0_4px_1px_#b8dca4]">
      <svg viewBox="0 0 16 24" className="h-6 w-4"><path d="M1.500 1.500h13v21h-13z" fill="#f4f8ff" stroke="#334" /><path d="M2 2h12v3H2z" fill="#a8c4ec" /><path d="M2 5.500h12M2 9.500h12M2 13.500h12M2 17.500h12M6 2v20M10 2v20" stroke="#6890c8" /></svg>
    </button>
  </div>
);

const GridBase = () => (
  <g><path d="M1.500 3.500h16v16h-16z" fill="#e4ecfc" stroke="#5070a8" /><path d="M1.500 8h16M1.500 12h16M1.500 16h16M6.500 3.500v16M12 3.500v16" stroke="#7898d0" /><path d="M4 9.500Q5 2.500 13.500 3.500V1L20 6.500 13.500 11V8Q8 6.500 4 9.500z" fill="url(#purple)" stroke="#e8c8f8" strokeWidth="0.600" /></g>
);

const NavArrow = () => <path d="M3 12l8.500-8v4.500H21v7h-9.500V20z" fill="url(#yellow)" stroke="#7c5c00" />;

const editTools = [
  {
    label: 'Tree', art: <g><path d="M2 4h13M8 9h14M8 13.500h14M5 18.500h13" stroke="#222" strokeWidth="3" /><path d="M3 4h11M8 9h13M8 13.500h13M5 18.500h12" stroke="#999" /><path d="M18 7Q8 5 9.500 14H6l5 7 5-7h-3.500q-.5-4 5.500-4z" fill="url(#purple)" stroke="#e0c0f0" strokeWidth="0.500" /></g>,
  },
  {
    label: 'Attachments', art: <g fill="none"><path d="M8 15L15 6.500q2-2 3.500-.5t0 3.500L10 19q-3.500 3-6 .5T3.500 13L12.500 3.500q3.500-3 6.500-1t1.500 6" stroke="#444" strokeWidth="2.800" /><path d="M8 15L15 6.500q2-2 3.500-.5t0 3.500L10 19q-3.500 3-6 .5T3.500 13L12.500 3.500q3.500-3 6.500-1t1.500 6" stroke="#e8e8e8" strokeWidth="1.500" /></g>,
  },
  {
    label: 'Export to Excel', art: <g><GridBase /><path d="M9 11h5l2 3.200 3-3.200h4.500L18.500 17l5 6h-5L16 19.800 13.500 23H8.500l5-6z" fill="#40b030" stroke="#fff" strokeWidth="0.800" /></g>,
  },
  {
    label: 'Export to CSV', art: <g><GridBase /><path d="M12.500 10.500h7l3 3v9h-10z" fill="url(#paper)" stroke="#555" /><path d="M19 10.500v3.500h3.500" fill="#fff" stroke="#888" strokeWidth="0.700" /></g>,
  },
  {
    label: 'Export to PDF', art: <g><GridBase /><path d="M12.500 10.500h7l3 3v9h-10z" fill="url(#paper)" stroke="#888" strokeWidth="0.700" /><path d="M12 15h12v7H12z" fill="#d81818" /><text x="18" y="20.700" textAnchor="middle" fontSize="6" fontWeight="bold" fill="#fff" fontFamily="Liberation Sans, sans-serif">PDF</text></g>,
  },
  {
    label: 'Search', art: <g><path d="M14 15l7 6.500" stroke="#333" strokeWidth="4" /><path d="M14 15l7 6.500" stroke="#a0a0a0" strokeWidth="2" /><circle cx="9.500" cy="9.500" r="7.500" fill="url(#lens)" stroke="#fff" strokeWidth="1.600" /><circle cx="9.500" cy="9.500" r="8.300" fill="none" stroke="#444" strokeWidth="0.500" /></g>,
  },
  {
    label: 'Audit', art: <g><circle cx="16" cy="8.500" r="7" fill="#eaf2fc" stroke="#3c5c90" strokeWidth="1.600" /><path d="M16 4v5h4" fill="none" stroke="#223" strokeWidth="1.500" /><path d="M1 21.500q0-6 4.500-6.500h3q4.500.5 4.500 6.500-6 2-12 0z" fill="#2890d0" stroke="#0c4880" strokeWidth="0.600" /><circle cx="7" cy="12.500" r="4" fill="#fcd0b8" stroke="#8c5c48" strokeWidth="0.700" /></g>,
  },
];

const navTools = [
  { label: 'First record', art: <g><path d="M3 2.500v19" stroke="#222" strokeWidth="3" /><path d="M3 3v18" stroke="#bbb" /><g transform="translate(2 0)"><NavArrow /></g></g> },
  { label: 'Previous record', art: <NavArrow /> },
  { label: 'Next record', art: <g transform="matrix(-1 0 0 1 24 0)"><NavArrow /></g> },
  { label: 'Last record', art: <g transform="matrix(-1 0 0 1 24 0)"><path d="M3 2.500v19" stroke="#222" strokeWidth="3" /><path d="M3 3v18" stroke="#bbb" /><g transform="translate(2 0)"><NavArrow /></g></g> },
];

const ToolButton = ({ label, art }: { label: string; art: React.ReactNode }) => (
  <button aria-label={label} className="flex w-[26px] shrink-0 justify-center">
    <svg viewBox="0 0 24 24" className="h-6 w-6 drop-shadow-[1px_2px_1px_#333]">{art}</svg>
  </button>
);

const Divider = ({ className = 'mx-[7px]' }: IconProps) => <span className={`h-6 w-px shrink-0 bg-[#222] shadow-[1px_0_0_#888] ${className}`} />;

const Toolbar = () => (
  <div className="flex h-9 items-center pl-[1px]">
    <ToolButton
      label="New"
      art={<g><path d="M2 2.500h16v19H2z" fill="url(#paper)" stroke="#666" /><path d="M7 3v18" stroke="#e09090" /><path d="M4 6h1M4 11h1M4 16h1" stroke="#333" strokeWidth="1.600" /><path d="M17 3l1.300 3.200 3-1.500L20 8l3.500 1L20 10.500l1.500 3-3.200-1.300L17 15.500l-1.300-3.300-3.200 1.300 1.400-3L10.500 9 14 8l-1.400-3.300 3 1.500z" fill="#fce880" stroke="#c08c08" strokeWidth="0.700" /></g>}
    />
    <Divider />
    <ToolButton
      label="Delete"
      art={<g><path d="M4 4.500l2 17q6 2 12 0l2-17z" fill="#c8dcf0" stroke="#7890a8" strokeWidth="0.800" /><ellipse cx="12" cy="4" rx="8.500" ry="2.500" fill="#eef6fc" stroke="#8098b0" strokeWidth="0.800" /><path d="M8 12q1-4 5-3l1-1.500 2 4h-4l1-1q-2-.5-3 2zM16.500 13q-1 4-5 3.500l-1 1.500-2-4h4l-1 1.200q2 .3 3-2.200z" fill="#d83030" /></g>}
    />
    <Divider />
    {editTools.map((tool) => <ToolButton key={tool.label} {...tool} />)}
    <Divider className="mx-2" />
    {navTools.map((tool) => <ToolButton key={tool.label} {...tool} />)}
    <span className="ml-[7px] flex h-[18px] w-[55px] shrink-0 items-center justify-center rounded-full bg-[#505050] text-[#b0b0b0]">1 - 2 / 2</span>
    <Divider />
    <button className="ml-auto flex items-center font-bold text-[#b0b0b0]">
      <span className="flex h-[18px] w-[91px] items-center rounded-l-full bg-[#4c4c4c] pl-[14px]">Linked Items</span>
      <svg viewBox="0 0 24 24" className="-ml-[3px] h-6 w-6 drop-shadow-[0_1px_1px_#222]"><path d="M1 2h7v20H1z" fill="#4c4c4c" /><path d="M1.500 1.500v21M2 4h8M2 12h6M7 1.500L10 4 7 6.500M6 9.500L8.500 12 6 14.500" fill="none" stroke="#e4e4e4" strokeWidth="1.200" /><path d="M12.500 1h6l4 4v8h-10z" fill="url(#paper)" stroke="#fff" strokeWidth="0.800" /><path d="M9.500 9h6l4.500 4.500v9H9.500z" fill="url(#paper)" stroke="#333" /><path d="M15 9v4.500h4.500M18 1.500V5h4" fill="none" stroke="#555" /></svg>
    </button>
  </div>
);

const columns = ['Acti', 'Sum', 'Search Key', 'Name', 'Description', 'Organization Type'];
const emptyRows = Array.from({ length: 17 }, (_, i) => i);

const cell = 'overflow-hidden whitespace-nowrap border-r border-b border-[#808080] px-1 pb-[2px] last:border-r-0';
const lineCell = 'w-[43px] border-r border-b border-black pb-[2px]';

const DataGrid = () => (
  <div className="ml-[17px] mr-[25px] mt-[21px] border-4 border-r-0 border-[#1c4c6c]">
    <table className="w-full table-fixed border-separate border-spacing-0 text-left leading-4">
      <colgroup>
        <col className="w-[43px]" />
        <col className="w-[26px]" />
        <col className="w-[26px]" />
        <col className="w-[123px]" />
        <col className="w-[303px]" />
        <col className="w-[303px]" />
        <col />
      </colgroup>
      <thead>
        <tr className="h-[22px]">
          <th aria-label="Line" className="border-r border-b-2 border-black bg-[#505050]" />
          {columns.map((name) => (
            <th key={name} className="overflow-hidden whitespace-nowrap border-r border-b-2 border-black bg-linear-to-b from-[#e0e0e0] to-[#999] py-0 pl-1 pr-0 font-bold last:border-r-0">
              {name === 'Search Key' && <svg viewBox="0 0 7 6" className="mr-[2px] inline h-[6px] w-[7px]"><path d="M0 0h7L3.500 6z" fill="#222" /></svg>}
              {name}
            </th>
          ))}
        </tr>
      </thead>
      <tbody>
        <tr className="h-5">
          <td className={`${lineCell} bg-[#505050] pl-1 text-[#eee]`}>1</td>
          {['Y', 'N', '0', '*', 'All Organizations', 'Organization'].map((v, i) => (
            <td key={i} className={`${cell} bg-linear-to-b from-white to-[#dedede]`}>{v}</td>
          ))}
        </tr>
        <tr className="h-5">
          <td className={`${lineCell} bg-[#505050] pl-1 text-[#eee]`}>2</td>
          {['Y', 'N', 'TryToDeleteMe :o)', 'TryToDeleteMe :o)', '', 'Generic'].map((v, i) => (
            <td key={i} className={`${cell} bg-linear-to-b from-[#1c4c70] to-[#448cc0] text-white`}>{v}</td>
          ))}
        </tr>
        {emptyRows.map((row) => (
          <tr key={row} className="h-[19px] last:h-[17px] last:[&>td]:border-b-0">
            <td className={lineCell} />
            {columns.map((name) => <td key={name} className={cell} />)}
          </tr>
        ))}
      </tbody>
    </table>
  </div>
);

const ScrollBar = () => (
  <div className="ml-[17px] mr-[25px] mt-[13px] flex h-4 items-center bg-[#c8bca4]">
    <button aria-label="Scroll left" className="flex h-4 w-5 shrink-0 items-center justify-center rounded-l-lg bg-linear-to-b from-[#e4dccf] to-white">
      <svg viewBox="0 0 6 6" className="h-[6px] w-[6px]"><path d="M6 0v6L0 3z" fill="#b8aa90" /></svg>
    </button>
    <div className="flex h-4 min-w-0 flex-1 border-t border-[#c0b49c] bg-linear-to-b from-[#dfd6c8] to-white">
      <div className="-mt-px flex h-4 w-[74%] items-center justify-center gap-[2px] rounded-full border border-[#b4a58a] bg-linear-to-b from-white via-[#f2efe6] to-[#e0d6c6]">
        <span className="h-[6px] w-px bg-[#b8aa90]" />
        <span className="h-[6px] w-px bg-[#b8aa90]" />
        <span className="h-[6px] w-px bg-[#b8aa90]" />
      </div>
    </div>
    <button aria-label="Scroll right" className="flex h-4 w-5 shrink-0 items-center justify-center rounded-r-lg bg-linear-to-b from-[#e4dccf] to-white">
      <svg viewBox="0 0 6 6" className="h-[6px] w-[6px]"><path d="M0 0v6l6-3z" fill="#4c4a44" /></svg>
    </button>
  </div>
);

const Workspace = () => (
  <main className="relative flex min-w-0 flex-1 flex-col rounded-tl-lg bg-[linear-gradient(to_bottom,#9c9c9c_0,#505050_54px)] px-2 pb-2 text-[11px] text-black shadow-[0_0_5px_2px_#b8dca4] [font-family:'Liberation_Sans',sans-serif]">
    <Toolbar />

    {/* Window tabs, hanging over the top edge of the form area */}
    <div className="relative z-10 flex h-4 items-start justify-between pl-[23px] pr-[45px]">
      <button className="mt-1 flex h-6 w-[92px] items-center justify-center rounded-t border-x border-t border-[#222] bg-linear-to-b from-white to-[#e8e8e8] pb-[6px] font-bold">Organization</button>
      <div className="relative flex h-[26px] w-[163px] items-center pl-[19px] text-[15px] font-bold text-[#a0a0a0]">
        <svg viewBox="0 0 163 18" preserveAspectRatio="none" className="absolute left-0 top-0 h-[18px] w-full">
          <path d="M0 18v-1.500Q3 16 3 12V6q0-5 5-5.300h148q5 .3 5 5.300v6q0 4 2 4.500V18z" fill="url(#tab)" />
          <path d="M0 16.500Q3 16 3 12V6q0-5.300 5-5.300h148q5 0 5 5.300v6q0 4 2 4.500" fill="none" stroke="#111" strokeWidth="1.200" />
        </svg>
        <span className="relative">Organization</span>
        <span className="relative ml-2 h-5 w-px bg-[#ccc]" />
        <BravoIcon className="relative ml-[9px] h-[18px] w-[18px] text-[#7ca850]" />
      </div>
    </div>

    <div className="flex-1 border border-black bg-[#e8e8e8] pb-6 pt-[13px]">
      <nav className="mx-[17px] flex h-[17px] items-center rounded-sm border border-[#222] bg-[#505050] pl-4 text-[#eee]">
        <a href="#information" className="pb-px pr-[5px]">Information</a>
        <a href="#org-schema" className="border-l border-black px-[5px] pb-px">Org Schema</a>
        <a href="#period-control" className="border-l border-black px-[5px] pb-px">Period Control</a>
      </nav>

      <div role="alert" className="ml-[22px] mr-[18px] mt-[26px] flex h-[55px] items-center rounded-lg border-2 border-[#5c1008] bg-linear-to-b from-[#941c08] to-[#c82e14] to-40% pl-[15px]">
        <svg viewBox="0 0 28 28" className="h-7 w-7 shrink-0">
          <path d="M9 2h10l7 7v10l-7 7H9l-7-7V9z" fill="url(#glossRed)" stroke="#4c0c04" strokeWidth="1.400" />
          <path d="M9 9l10 10M19 9L9 19" stroke="#981808" strokeWidth="3.200" />
        </svg>
        <p className="mb-[5px] ml-[13px] leading-[13px] text-[#fcd0c0]">
          ERROR: update o delete en «ad_org» viola la llave foránea «ad_treenode_ad_org» en la tabla «ad_treenode» Detail: La llave (ad_org_id)=(78CB6022945749A7AFDF161FD940C112) todavía es referida desde la tabla «ad_treenode».
        </p>
      </div>

      <DataGrid />
      <ScrollBar />
    </div>
  </main>
);

const StatusBar = () => (
  <footer className="relative z-10 flex h-[26px] items-center border-t border-[#faf6e8] bg-[#efeae3] pl-[5px] pr-2 text-[13px] text-[#3c3b37] [font-family:'DejaVu_Sans',sans-serif]">
    <svg viewBox="0 0 22 14" className="h-[14px] w-[22px]"><path d="M.7.7h20.600v12.600H.7z" fill="#e8e6e0" stroke="#55534d" strokeWidth="1.300" /><path d="M3 10.500h16M5 8v2M8 5v5M11 7v3M14 5v5M17 8v2" stroke="#77756e" strokeWidth="1.200" /></svg>
    <span className="ml-3 pb-px">Terminado</span>
    <svg viewBox="0 0 16 12" className="ml-auto h-3 w-4"><ellipse cx="10" cy="5" rx="5" ry="3.200" fill="#9a9a9a" transform="rotate(-20 10 5)" /><circle cx="5" cy="6.500" r="2.600" fill="#333" /><path d="M0 4l4 2M1 9l3-2M5 12l1-4M9 11L8 7M13 1l1 2M12 8l3 1" stroke="#666" strokeWidth="0.800" /></svg>
    <span className="ml-[13px] flex h-[10px] w-[10px] items-center justify-center bg-[#ecdc50] text-[8px] font-bold">P</span>
  </footer>
);

const App: React.FC = () => {
  return (
    <div className="relative flex min-h-screen flex-col overflow-hidden">
      <SharedDefs />
      <BrowserChrome />
      <TopBar />
      <div className="flex flex-1 bg-linear-to-b from-[#3a9014] to-[#205c10]">
        <Sidebar />
        <Gutter />
        <Workspace />
      </div>
      <StatusBar />

      {/* Mouse pointer */}
      <svg viewBox="0 0 13 21" className="absolute left-[834px] top-[672px] h-[21px] w-[13px]">
        <path d="M1 1v15.500l3.500-3.300 2.600 6 2.600-1.200-2.500-5.700h4.600z" fill="#fff" stroke="#000" strokeWidth="1.200" />
      </svg>
    </div>
  );
};

export default App;
